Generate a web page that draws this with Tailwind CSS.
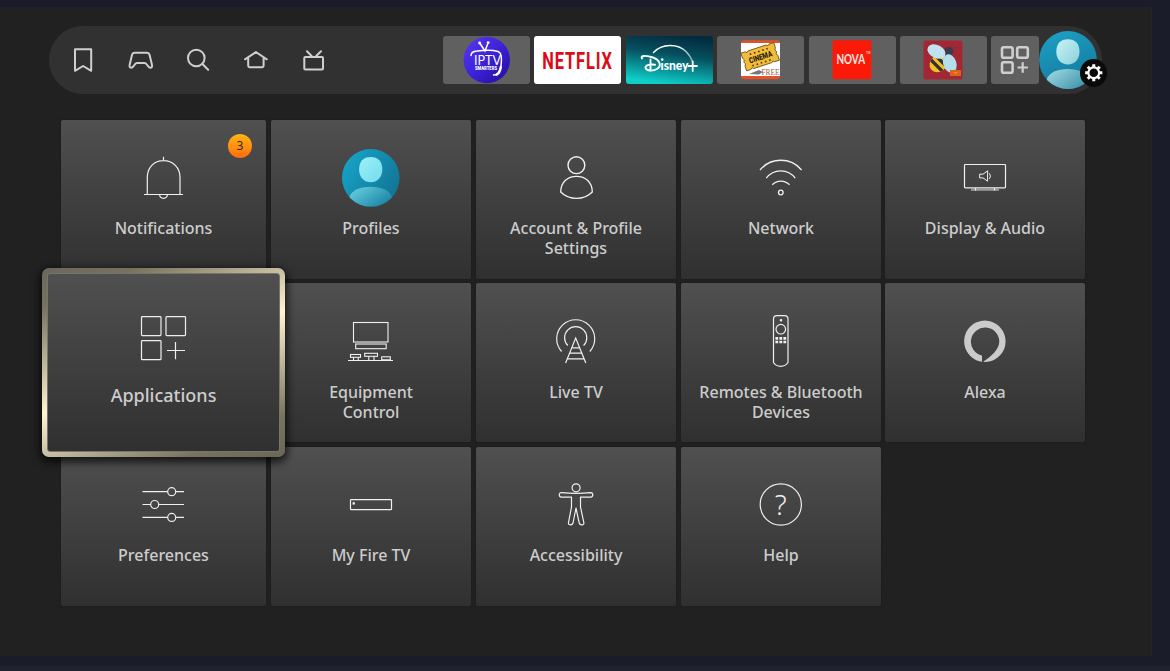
<!DOCTYPE html>
<html lang="en">
<head>
<meta charset="utf-8">
<title>Fire TV Settings</title>
<script src="https://cdn.jsdelivr.net/npm/@tailwindcss/browser@4"></script>
</head>
<body class="h-[671px] w-[1170px] overflow-hidden bg-[#1a1d29] pt-[7px] font-['Noto_Sans',sans-serif] text-[#cdcdcd]">
<main class="h-[649px] w-[1152px] border-r border-[#262626] bg-[#212121] pt-[19px]">

  <header class="ml-[49px] flex h-[68px] w-[1053px] items-center rounded-full bg-[#313131] pl-5">
    <nav class="flex gap-[29.5px]">
      <svg class="size-7" viewBox="0 0 28 28" fill="none" stroke="#cfcfcf" stroke-width="2"><path d="M6 3.3H22.2V24.8L14.1 20L6 24.8Z" stroke-linejoin="round"/></svg>
      <svg class="size-7" viewBox="0.6 0 28 28" fill="none" stroke="#cfcfcf" stroke-width="2" stroke-linejoin="round"><path d="M8.3 6.8H20.5C22 6.8 22.8 7.6 23.2 9L25.5 18.5C26.1 21 25 21.8 23.8 21.8C21.3 21.8 21 17 18.2 17H10.6C7.8 17 7.5 21.8 5 21.8C3.8 21.8 2.7 21 3.3 18.5L5.6 9C6 7.6 6.8 6.8 8.3 6.8Z"/></svg>
      <svg class="size-7" viewBox="0 0 28 28" fill="none" stroke="#cfcfcf" stroke-width="2" stroke-linecap="round"><circle cx="12.3" cy="12" r="8.3"/><path d="M18.2 17.8L24.2 23.8"/></svg>
      <svg class="size-7" viewBox="0.6 0 28 28" fill="none" stroke="#cfcfcf" stroke-width="2" stroke-linecap="round" stroke-linejoin="round"><path d="M3.6 13.3L14.5 6L25.4 13.3M6.8 12V19.8Q6.8 21.2 8.2 21.2H20.8Q22.2 21.2 22.2 19.8V12"/></svg>
      <svg class="size-7" viewBox="0 0 28 28" fill="none" stroke="#cfcfcf" stroke-width="2" stroke-linecap="round"><rect x="5.3" y="11" width="18.7" height="12.4" rx="1"/><path d="M8 5.2L12.8 10.2M22 5.2L17 10.2"/></svg>
    </nav>

    <div class="ml-[116px] flex gap-[4.4px]">
      <div class="h-12 w-[87px] overflow-hidden rounded-[3px] bg-[#606060]">
        <svg class="h-12 w-[87px]" viewBox="0 0 87 48">
          <defs><linearGradient id="iptv" x1="0" y1="0" x2="1" y2="1"><stop offset="0" stop-color="#5a3af0"/><stop offset=".5" stop-color="#3c22d8"/><stop offset="1" stop-color="#240a9a"/></linearGradient></defs>
          <circle cx="43.8" cy="24" r="23.2" fill="url(#iptv)"/>
          <g fill="none" stroke="#fff" stroke-linecap="round"><path d="M37 7.5L42 15L45 7M28 19.5Q28 15.5 34 15Q48 13.2 55 15.5Q59 17 58.4 25Q58 36 54 38.5L50.5 39" stroke-width="1.5"/><path d="M57.8 31Q57 37 53.5 38.6" stroke-width="2.4"/></g>
          <circle cx="36.6" cy="7" r="1.4" fill="#fff"/><circle cx="45.2" cy="6.6" r="1.4" fill="#fff"/>
          <text x="31" y="28.8" font-family="Lato" font-size="13.5" fill="#fff" textLength="27" lengthAdjust="spacingAndGlyphs">IPTV</text>
          <text x="32" y="34" font-family="Roboto" font-weight="900" font-size="5" fill="#fff" textLength="22" lengthAdjust="spacingAndGlyphs">SMARTERS</text>
        </svg>
      </div>
      <div class="h-12 w-[87px] overflow-hidden rounded-[3px] bg-white">
        <svg class="h-12 w-[87px]" viewBox="0 0 87 48"><text transform="translate(8.2 32.8) scale(.67 1)" font-family="Roboto" font-weight="700" font-size="24.5" fill="#dc0a14" textLength="104">NETFLIX</text></svg>
      </div>
      <div class="h-12 w-[87px] overflow-hidden rounded-[3px]">
        <svg class="h-12 w-[87px]" viewBox="0 0 87 48">
          <defs>
            <linearGradient id="dis" x1=".7" y1="0" x2=".45" y2="1"><stop offset="0" stop-color="#032b3e"/><stop offset=".4" stop-color="#06505f"/><stop offset=".8" stop-color="#0aa5a6"/><stop offset="1" stop-color="#0fd0c8"/></linearGradient>
            <linearGradient id="arc"><stop offset="0" stop-color="#fff"/><stop offset=".6" stop-color="#fff"/><stop offset="1" stop-color="#fff" stop-opacity=".5"/></linearGradient>
          </defs>
          <rect width="87" height="48" fill="url(#dis)"/>
          <path d="M27.5 16.5C36 7 52 7.5 60 15.5Q65 20.5 66.5 26" fill="none" stroke="url(#arc)" stroke-width="1.4" stroke-linecap="round"/>
          <path d="M16 22.5C14 19.5 20 19 27 21.5C34 24 36 30 31 33C27 35.5 20 35 19.5 31.5C19.3 29 25 28 29 28.8M24.5 23.5V34.5" fill="none" stroke="#fff" stroke-width="1.9" stroke-linecap="round"/>
          <text x="34.5" y="33.8" font-family="Lato" font-weight="900" font-size="13.5" fill="#fff" textLength="28" lengthAdjust="spacingAndGlyphs">ısney</text>
          <circle cx="36.2" cy="23.6" r="1.3" fill="#fff"/>
          <path d="M62.5 30H71M66.7 25.5V35" stroke="#fff" stroke-width="1.8" stroke-linecap="round"/>
        </svg>
      </div>
      <div class="h-12 w-[87px] overflow-hidden rounded-[3px] bg-[#606060]">
        <svg class="h-12 w-[87px]" viewBox="0 0 87 48">
          <rect x="24" y="4.3" width="39" height="39" rx="3" fill="#e2502c"/><rect x="24" y="7" width="39" height="33" fill="#fff"/>
          <path d="M32 38L42 34L46 36L42 38.5Z" fill="#777"/>
          <g transform="rotate(-18 43 21)"><path d="M26 11.5H30.5Q32 14 33.5 11.5H52.5Q54 14 55.5 11.5H60.5V17Q58 18.8 60.5 21Q58 23 60.5 24.8V30H55.5Q54 27.5 52.5 30H33.5Q32 27.5 30.5 30H26V24.8Q28.5 23 26 21Q28.5 18.8 26 17Z" fill="#f2bd3a" stroke="#6b4a12" stroke-width=".8"/>
          <path d="M34 15.3H53M33 27H53" stroke="#4a3510" stroke-width="1.6" stroke-dasharray="1.6 2.8"/>
          <text x="31.5" y="24" font-family="Roboto" font-weight="900" font-size="8" fill="#2d220d" textLength="24" lengthAdjust="spacingAndGlyphs">CINEMA</text></g>
          <text x="44.5" y="38.5" font-family="Liberation Serif" font-size="8" fill="#9c5a46" textLength="18" lengthAdjust="spacingAndGlyphs">FREE</text>
        </svg>
      </div>
      <div class="h-12 w-[87px] overflow-hidden rounded-[3px] bg-[#606060]">
        <svg class="h-12 w-[87px]" viewBox="0 0 87 48"><rect x="23.5" y="4.3" width="39" height="39" rx="2.5" fill="#fb1a08"/><text x="27.5" y="27.8" font-family="Lato" font-weight="700" font-size="13.5" fill="#ffe9e6" textLength="28.5" lengthAdjust="spacingAndGlyphs">NOVA</text><text x="57" y="18" font-family="Roboto" font-size="3" fill="#fff">TM</text></svg>
      </div>
      <div class="h-12 w-[87px] overflow-hidden rounded-[3px] bg-[#606060]">
        <svg class="h-12 w-[87px]" viewBox="0 0 87 48">
          <defs><clipPath id="bee"><ellipse cx="38.5" cy="27.5" rx="9.5" ry="8" transform="rotate(-40 38.5 27.5)"/></clipPath></defs>
          <rect x="23.5" y="4.5" width="39" height="39" rx="2.5" fill="#a32635"/>
          <path d="M50 12L53 8M53 13L57.5 10" stroke="#6d3442" stroke-width="1"/>
          <g clip-path="url(#bee)"><rect x="26" y="15" width="26" height="26" fill="#f3bf22"/><path d="M29 22L44 37M33 17L50 34" stroke="#303038" stroke-width="3.2"/></g>
          <circle cx="48.7" cy="15.5" r="4.6" fill="#3c3a48"/>
          <ellipse cx="36.5" cy="15.5" rx="9.6" ry="6.6" transform="rotate(28 36.5 15.5)" fill="#bfe3ef"/>
          <ellipse cx="49.8" cy="27.5" rx="6.6" ry="9.4" transform="rotate(-18 49.8 27.5)" fill="#b3dfec"/>
          <rect x="50" y="34" width="11" height="6" fill="#d9641c"/><path d="M53 36H58L55.5 38Z" fill="#f0902a"/>
        </svg>
      </div>
      <div class="h-12 w-12 overflow-hidden rounded-[3px] bg-[#606060]">
        <svg class="size-12" viewBox="0 0 48 48" fill="none" stroke="#cfcfcf" stroke-width="2.6"><rect x="11" y="11.2" width="10.6" height="10.6" rx="1.8"/><rect x="26.2" y="11.2" width="10.6" height="10.6" rx="1.8"/><rect x="11" y="26.2" width="10.6" height="10.6" rx="1.8"/><path d="M26.5 31.5H36.9M31.7 26.3V36.7" stroke-width="2.2"/></svg>
      </div>
    </div>

    <div class="relative size-[58px]">
      <svg class="size-[58px]" viewBox="0 0 58 58">
        <defs>
          <clipPath id="avc"><circle cx="29" cy="29" r="28.9"/></clipPath>
          <linearGradient id="avb" x1=".2" y1="0" x2=".6" y2="1"><stop offset="0" stop-color="#1ba0c4"/><stop offset="1" stop-color="#14789c"/></linearGradient>
          <linearGradient id="avh" x1="0" y1="0" x2="1" y2="1"><stop offset="0" stop-color="#c8f3f6"/><stop offset="1" stop-color="#8ccfd9"/></linearGradient>
          <linearGradient id="avs" x1="0" y1="0" x2="1" y2=".7"><stop offset="0" stop-color="#a5dce2"/><stop offset="1" stop-color="#3b92ad"/></linearGradient>
        </defs>
        <circle cx="29" cy="29" r="28.9" fill="url(#avb)"/>
        <path d="M28.9 8.3C36.5 8.3 40.5 13 40.5 20.8S35.5 33.5 28.9 33.5S17.3 28.5 17.3 20.8S21.3 8.3 28.9 8.3Z" fill="url(#avh)"/>
        <path d="M7.8 48C10.5 41.5 18 38 28.8 38S47 41.5 50 48V60H7.8Z" fill="url(#avs)" clip-path="url(#avc)"/>
      </svg>
      <div class="absolute top-[28px] left-[40.5px] size-[27.5px] rounded-full bg-[#0a0a0a]">
        <svg class="size-[27.5px]" viewBox="-13.75 -13.75 27.5 27.5" fill="none" stroke="#fff"><circle r="5.4" stroke-width="2.2"/><path d="M0-8.6V-5.5M0 8.6V5.5M-8.6 0H-5.5M8.6 0H5.5M-6-6L-4-4M6-6L4-4M-6 6L-4 4M6 6L4 4" stroke-width="3"/></svg>
      </div>
    </div>
  </header>

  <section class="mt-[26px] ml-[61px] grid grid-cols-[210px_205px_205px_204px_200px] grid-rows-[163px_164px_158px] text-center text-base leading-5 font-medium [&>div]:flex [&>div]:h-[158.5px] [&>div]:w-[200px] [&>div]:flex-col [&>div]:items-center [&>div]:rounded-[2px] [&>div]:bg-linear-to-b [&>div]:from-[#505050] [&>div]:to-[#303030] [&>div]:pt-7 [&>div]:shadow-[0_0_2px_#181818]">
    <div class="relative w-[205px]!">
      <svg class="h-15 w-[61px]" viewBox="0 0 61 60" fill="none" stroke="#f0f0f0" stroke-width="1.2"><path d="M14.3 46.5V29.5C14.3 19.5 21 12.7 30.5 12.7S47 19.5 47 29.5V46.5M11 46.5H50M30.5 8.7V12.7M26.5 46.5Q27 50.3 30.5 50.3T34.5 46.5"/></svg>
      <p class="mt-2.5">Notifications</p>
      <span class="absolute top-[14px] right-[14px] flex size-6 items-center justify-center rounded-full bg-linear-to-b from-[#fdb515] to-[#ff6a0a] text-xs font-normal text-[#33240a]">3</span>
    </div>
    <div>
      <svg class="size-15" viewBox="0 0 60 60">
        <defs><clipPath id="pc"><circle cx="29.8" cy="29.8" r="28.8"/></clipPath>
        <linearGradient id="pb" x1="0" y1=".2" x2="1" y2=".8"><stop offset="0" stop-color="#16a4c8"/><stop offset="1" stop-color="#127292"/></linearGradient>
        <linearGradient id="ph" x1="0" y1="0" x2="1" y2="1"><stop offset="0" stop-color="#9df0f8"/><stop offset="1" stop-color="#72dcea"/></linearGradient>
        <linearGradient id="ps" x1="0" y1="0" x2="1" y2=".7"><stop offset="0" stop-color="#6fd4e4"/><stop offset="1" stop-color="#1784a4"/></linearGradient></defs>
        <circle cx="29.8" cy="29.8" r="28.8" fill="url(#pb)"/>
        <path d="M29.7 9C37.3 9 41.3 13.7 41.3 21.5S36.3 34.3 29.7 34.3S18.1 29.3 18.1 21.5S22.1 9 29.7 9Z" fill="url(#ph)"/>
        <path d="M8.3 49C11 42 19 38.7 29.6 38.7S48 42 51 49V60H8Z" fill="url(#ps)" clip-path="url(#pc)"/>
      </svg>
      <p class="mt-2.5">Profiles</p>
    </div>
    <div>
      <svg class="size-15" viewBox="0 0 60 60" fill="none" stroke="#f0f0f0" stroke-width="1.4"><circle cx="30.4" cy="17.2" r="8.4"/><path d="M14.7 44C14.7 34 21.5 28.4 30.5 28.4S46.3 34 46.3 44C42 48.3 37 50.4 30.5 50.4S19 48.3 14.7 44Z"/></svg>
      <p class="mt-2.5">Account &amp; Profile<br>Settings</p>
    </div>
    <div>
      <svg class="size-15" viewBox="0 0 60 60" fill="none" stroke="#f0f0f0" stroke-width="1.3"><path d="M9 22A27.1 27.1 0 0 1 50.6 22M15.3 30.2A17.8 17.8 0 0 1 44.2 30.2M21.2 36.8A11.8 11.8 0 0 1 38.5 36.8"/><circle cx="29.8" cy="44.5" r="2.3"/></svg>
      <p class="mt-2.5">Network</p>
    </div>
    <div>
      <svg class="size-15" viewBox="0 0 60 60" fill="none" stroke="#f0f0f0" stroke-width="1.2"><path d="M16 41.8H44" stroke="#999" stroke-width="2"/><rect x="9.5" y="16.5" width="41" height="23.3" rx=".8"/><path d="M20.5 40V42.5M39.5 40V42.5"/><path d="M24.6 26.2H28L32.6 22.8V33.2L28 29.9H24.6ZM34.5 25.4Q36.4 28 34.5 30.8" stroke-width="1"/></svg>
      <p class="mt-2.5">Display &amp; Audio</p>
    </div>

    <div class="relative z-10 w-[205px]!">
      <div class="absolute -top-[15px] -left-[19px] h-[189px] w-[243px] rounded-[7px] bg-[linear-gradient(157deg,#6a675b_0%,#77735f_14%,#c6bda1_35%,#fff3d2_50%,#c6bda1_65%,#77735f_86%,#6a675b_100%)] p-[5px] shadow-[0_3px_8px_2px_rgba(0,0,0,.75)]">
        <div class="flex h-full flex-col items-center rounded-[3px] border border-[#77746a] bg-linear-to-b from-[#505050] to-[#303030] pt-[34px]">
          <svg class="h-15 w-[61px]" viewBox="0 0 61 60" fill="none" stroke="#eee" stroke-width="1.2"><rect x="8.5" y="8.6" width="19.5" height="19" rx=".8"/><rect x="33" y="8.6" width="19.5" height="19" rx=".8"/><rect x="8.5" y="32.7" width="19.5" height="19" rx=".8"/><path d="M34 42.5H52M42.5 34V51.3"/></svg>
          <p class="mt-[15px] text-[18px] leading-6">Applications</p>
        </div>
      </div>
    </div>
    <div>
      <svg class="size-15" viewBox="0 0 60 60" fill="none" stroke="#f0f0f0" stroke-width="1.1"><rect x="12.5" y="11.5" width="34.5" height="19.5"/><rect x="14.7" y="33" width="30.5" height="4.7"/><path d="M7 49.5H52"/><rect x="9.5" y="43.5" width="10" height="2.8"/><path d="M12.5 46.5V49.5M17.2 46.5V49.5M27.8 45.5V49.5M33 45.5V49.5"/><rect x="23.7" y="42.3" width="12.8" height="3"/><rect x="40.7" y="45.8" width="8.6" height="3"/></svg>
      <p class="mt-[11px]">Equipment<br>Control</p>
    </div>
    <div>
      <svg class="size-15" viewBox="0 0 60 60" fill="none" stroke="#f0f0f0" stroke-width="1.2"><path d="M15.6 40.5A19 19 0 1 1 43.8 40.5M21.8 34.5A11.1 11.1 0 1 1 37.6 34.5M19.6 52L29.7 27L39.8 52M26 36.8H33.5M23.8 42.2H35.8M21.6 47.8H38"/></svg>
      <p class="mt-[11px]">Live TV</p>
    </div>
    <div>
      <svg class="size-15" viewBox="0 0 60 60" fill="none" stroke="#f0f0f0" stroke-width="1.2"><path d="M22.5 8Q22.5 4.6 26 4.6H33.5Q37 4.6 37 8V51.5Q34.5 55.3 29.7 55.3T22.5 51.5Z"/><circle cx="29.8" cy="18.2" r="4.8"/><circle cx="30" cy="9.2" r=".7" fill="#f0f0f0"/><path d="M24.4 27.3H35.3M24.4 31H35.3" stroke-width="2.7" stroke-dasharray="2.8 1.2"/></svg>
      <p class="mt-[11px]">Remotes &amp; Bluetooth<br>Devices</p>
    </div>
    <div>
      <svg class="size-15" viewBox="0 0 60 60" fill="#cbcbcb"><path d="M27 51V44.6A14.2 14.2 0 1 1 44.3 30.6C44 38.5 37 45 28.2 50.7L30 51A20.7 20.7 0 1 0 27 50.8Z"/></svg>
      <p class="mt-[11px]">Alexa</p>
    </div>

    <div class="w-[205px]!">
      <svg class="h-15 w-[61px]" viewBox="0 0 61 60" fill="none" stroke="#f0f0f0" stroke-width="1.2"><path d="M9.5 16.7H34.7M42.7 16.7H51M9.5 29.5H17.7M25.7 29.5H51M9.5 42.4H34.7M42.7 42.4H51"/><circle cx="38.7" cy="16.7" r="4"/><circle cx="21.7" cy="29.5" r="4"/><circle cx="38.7" cy="42.4" r="4"/></svg>
      <p class="mt-2.5">Preferences</p>
    </div>
    <div>
      <svg class="size-15" viewBox="0 0 60 60" fill="none" stroke="#f0f0f0" stroke-width="1.2"><rect x="9.5" y="24.6" width="41" height="10" rx=".5"/><rect x="12.2" y="27.8" width="1" height="1.2" fill="#fff"/></svg>
      <p class="mt-2.5">My Fire TV</p>
    </div>
    <div>
      <svg class="size-15" viewBox="0 0 60 60" fill="none" stroke="#f0f0f0" stroke-width="1.2" stroke-linejoin="round"><circle cx="30.1" cy="12.8" r="4"/><path d="M15.5 17.6Q30 19.2 44.7 17.6Q46.8 17.6 46.8 19.8T44.7 22.2H34.5V32L37.8 47.5Q38.2 49.8 36 49.9T33.2 48L30 33L27 48Q26.5 49.9 24.3 49.8T22.5 47.5L25.5 32V22.2H15.5Q13.3 22.2 13.3 19.8T15.5 17.6Z"/></svg>
      <p class="mt-2.5">Accessibility</p>
    </div>
    <div>
      <svg class="size-15" viewBox="0 0 60 60"><circle cx="29.8" cy="29.5" r="20.6" fill="none" stroke="#f0f0f0" stroke-width="1.2"/><text x="29.8" y="39.5" text-anchor="middle" font-family="Noto Sans" font-weight="300" font-size="28" fill="#f0f0f0">?</text></svg>
      <p class="mt-2.5">Help</p>
    </div>
  </section>
</main>
<div class="mt-[10px] h-[5px] bg-[#20222e]"></div>
</body>
</html>
